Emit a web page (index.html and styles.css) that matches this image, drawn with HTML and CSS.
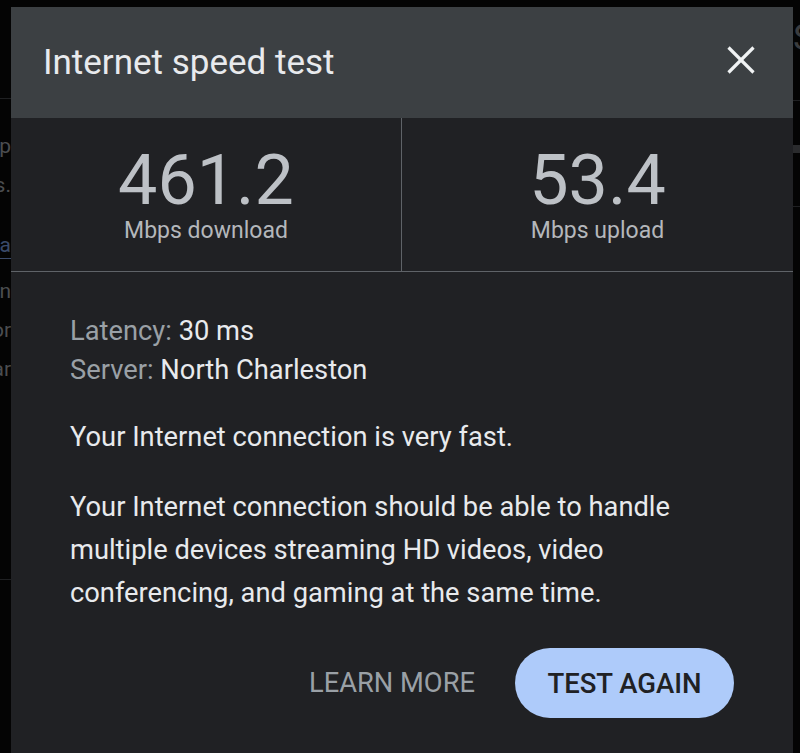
FILE: index.html
```html
<!DOCTYPE html>
<html lang="en">
<head>
<meta charset="utf-8">
<title>Internet speed test</title>
<link rel="stylesheet" href="styles.css">
</head>
<body>
<div class="page">
  <div class="edge edge-left">
    <div class="rule rule-top"></div>
    <div class="frag frag-first">is sp</div>
    <div class="frag">ms.</div>
    <div class="frag frag-link"><span>la</span></div>
    <div class="frag">un</div>
    <div class="frag">or</div>
    <div class="frag">ar</div>
    <div class="rule rule-low"></div>
  </div>
  <div class="edge edge-right">
    <div class="frag-big">Sp</div>
    <div class="rule rule-r1"></div>
    <div class="chip"></div>
    <div class="rule rule-r2"></div>
  </div>

  <div class="dialog">
    <div class="dialog-header">
      <h1 class="dialog-title">Internet speed test</h1>
      <svg class="close-icon" viewBox="0 0 28 28" width="28" height="28" aria-label="Close">
        <line x1="1.5" y1="1.5" x2="26.5" y2="26.5"/>
        <line x1="26.5" y1="1.5" x2="1.5" y2="26.5"/>
      </svg>
    </div>
    <div class="stats">
      <div class="stat stat-first">
        <div class="stat-value">461.2</div>
        <div class="stat-label">Mbps download</div>
      </div>
      <div class="stat">
        <div class="stat-value">53.4</div>
        <div class="stat-label">Mbps upload</div>
      </div>
    </div>
    <div class="dialog-body">
      <div class="info">
        <div><span class="info-key">Latency:</span> <span class="info-val">30 ms</span></div>
        <div><span class="info-key">Server:</span> <span class="info-val">North Charleston</span></div>
      </div>
      <p class="para">Your Internet connection is very fast.</p>
      <p class="para">Your Internet connection should be able to handle multiple devices streaming HD videos, video conferencing, and gaming at the same time.</p>
      <div class="actions">
        <button class="btn-text">LEARN MORE</button>
        <button class="btn-primary">TEST AGAIN</button>
      </div>
    </div>
  </div>
</div>
</body>
</html>
```

FILE: styles.css
```css
* { box-sizing: border-box; }

html, body {
  margin: 0;
  padding: 0;
  background: #040404;
}

body {
  font-family: Roboto, "Liberation Sans", Arial, sans-serif;
}

.page {
  position: relative;
  width: 800px;
  height: 753px;
  overflow: hidden;
  display: flex;
  justify-content: space-between;
  background: #040404;
}

/* ---- faint page content behind the modal ---- */
.edge {
  display: flex;
  flex-direction: column;
  overflow: hidden;
  color: #4b4d50;
  font-size: 21px;
}

.edge-left {
  width: 11px;
}

.edge-right {
  width: 7px;
}

.rule {
  height: 1px;
  background: #1f2022;
  flex: none;
}

.rule-top { margin-top: 98px; }
.rule-low { margin-top: 190px; }

.frag {
  display: flex;
  justify-content: flex-end;
  white-space: nowrap;
  height: 39px;
  line-height: 39px;
  flex: none;
}

.frag-first { margin-top: 28px; }

.frag-link {
  margin-top: 28px;
}

.frag-link span {
  color: #3a4a6a;
  border-bottom: 1px solid #3a4a6a;
  line-height: 24px;
  height: 26px;
}

.frag-big {
  margin-top: 14px;
  font-size: 37px;
  line-height: 48px;
  color: #3a3c3f;
  white-space: nowrap;
}

.rule-r1 { margin-top: 38px; }

.chip {
  margin-top: 44px;
  width: 7px;
  height: 8px;
  background: #2a2b2d;
}

.rule-r2 { margin-top: 53px; }

/* ---- dialog ---- */
.dialog {
  position: absolute;
  left: 11px;
  top: 7px;
  width: 782px;
  bottom: -30px;
  background: #202124;
  color: #e8eaed;
}

.dialog-header {
  height: 111px;
  background: #3c4043;
  display: flex;
  align-items: center;
  justify-content: space-between;
  padding: 0 38px 0 32px;
}

.dialog-title {
  margin: 0;
  font-size: 35px;
  font-weight: 400;
  color: #e8eaed;
}

.close-icon {
  margin-top: -5px;
  stroke: #f1f3f4;
  stroke-width: 3.2;
  fill: none;
}

.stats {
  display: grid;
  grid-template-columns: 1fr 1fr;
  border-bottom: 1px solid #5f6368;
}

.stat {
  text-align: center;
  padding: 27px 0 29px;
  color: #bdc1c6;
}

.stat-first {
  border-right: 1px solid #5f6368;
}

.stat-value {
  font-size: 70px;
  line-height: 70px;
}

.stat-label {
  margin-top: 4px;
  font-size: 23px;
  line-height: 23px;
  color: #b4b7bb;
}

.dialog-body {
  padding: 40px 59px 0;
  font-size: 27.3px;
}

.info {
  line-height: 38.5px;
}

.info-key {
  color: #9aa0a6;
}

.info-val {
  color: #e8eaed;
}

.para {
  margin: 27px 0 0;
  line-height: 43px;
  color: #e8eaed;
}

.actions {
  margin-top: 33px;
  display: flex;
  justify-content: flex-end;
  align-items: center;
  gap: 40px;
}

.btn-text {
  border: none;
  background: none;
  padding: 0;
  font-family: inherit;
  font-size: 27.3px;
  color: #9aa0a6;
}

.btn-primary {
  border: none;
  height: 70px;
  width: 219px;
  border-radius: 35px;
  background: #aecbfa;
  color: #202124;
  font-family: inherit;
  font-size: 27.5px;
  font-weight: 500;
  padding: 0;
}
```
